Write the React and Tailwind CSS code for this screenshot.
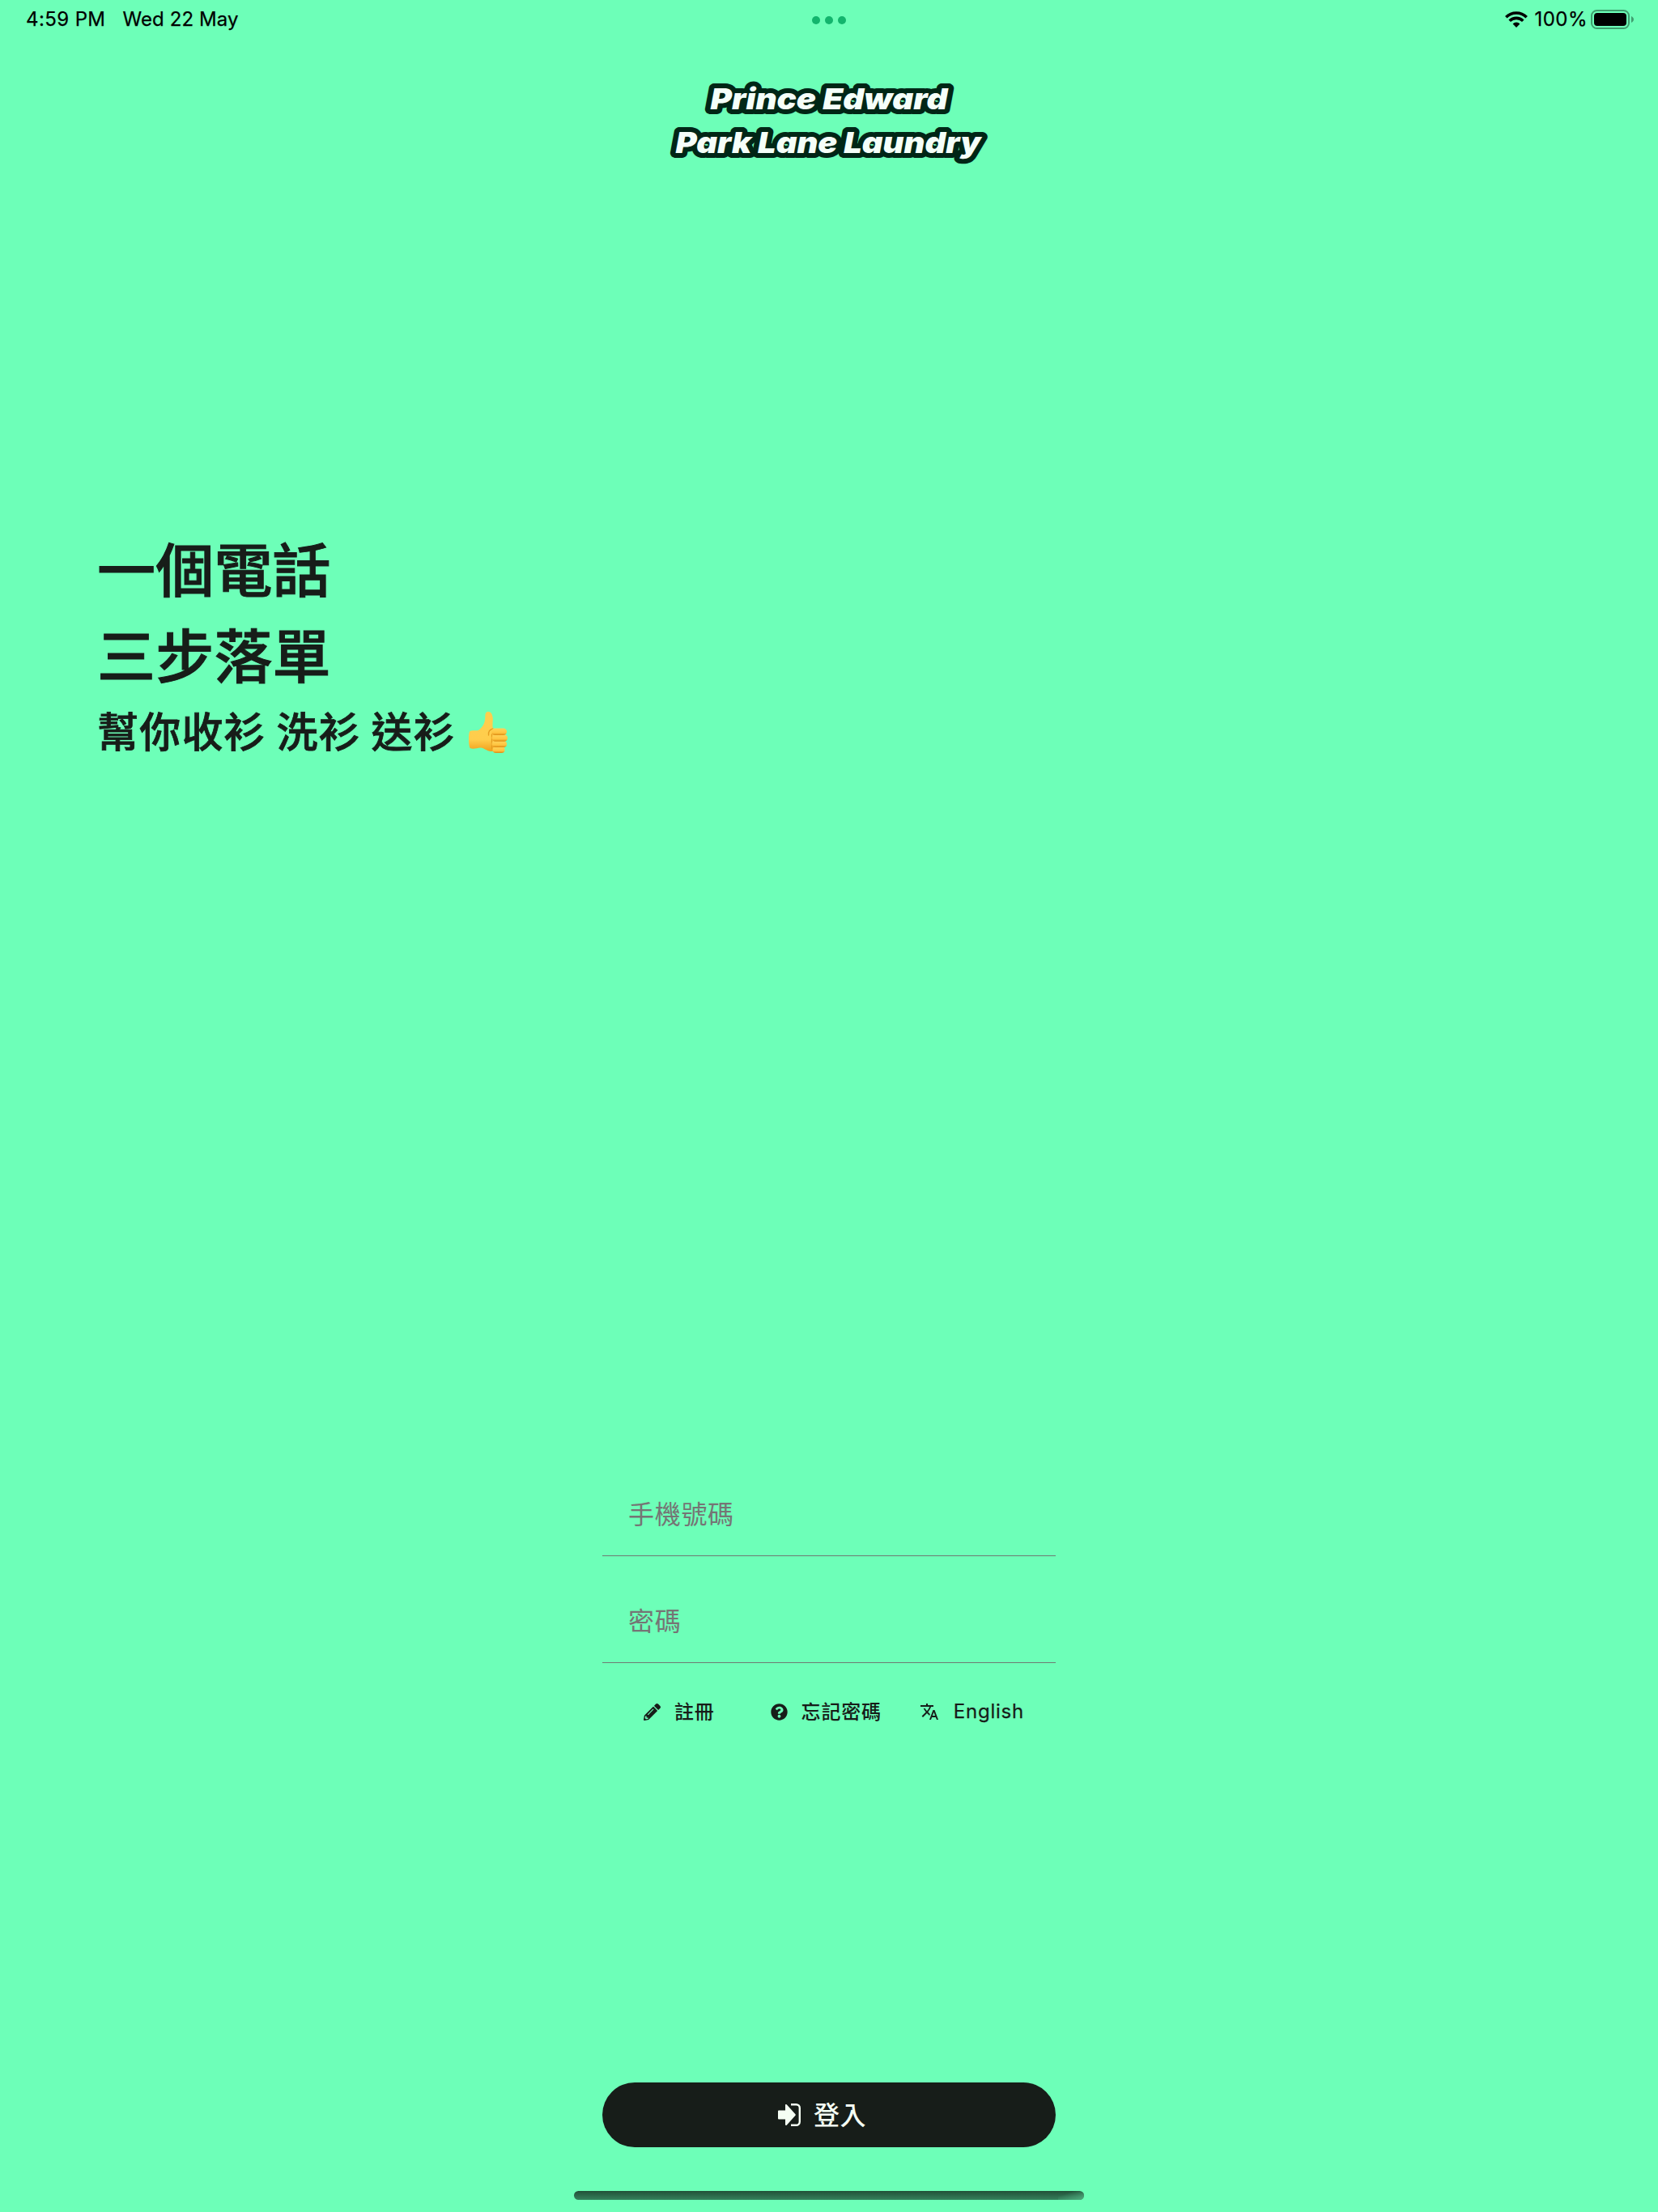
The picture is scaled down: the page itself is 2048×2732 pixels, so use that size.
import React from "react";
import { FaPencilAlt, FaQuestionCircle } from "react-icons/fa";
import { MdTranslate } from "react-icons/md";

const cjk = "font-['Noto_Sans_CJK_TC',sans-serif]";

function StatusBar() {
  return (
    <header className="grid h-12 grid-cols-3 items-center px-8 font-['Inter',sans-serif] text-[24px] font-normal leading-[46px] text-black [-webkit-text-stroke:0.25px_black]">
      <div className="flex gap-[21px] whitespace-nowrap">
        <span className="tracking-[0.4px]">4:59 PM</span>
        <span className="tracking-[0.1px]">Wed 22 May</span>
      </div>
      <div className="flex justify-center gap-1.5 pt-0.5">
        <i className="size-2.5 rounded-full bg-[#13b56d]" />
        <i className="size-2.5 rounded-full bg-[#13b56d]" />
        <i className="size-2.5 rounded-full bg-[#13b56d]" />
      </div>
      <div className="-mr-0.5 flex items-center justify-end">
        <svg width="28" height="20" viewBox="0 0 28 20" fill="none" stroke="#000" strokeWidth="3.6">
          <path d="M1.3 7.2a18 18 0 0 1 25.4 0" />
          <path d="M5.7 11.8a11.7 11.7 0 0 1 16.6 0" />
          <path d="M9.6 15.4a6.2 6.2 0 0 1 8.8 0L14 20z" fill="#000" stroke="none" />
        </svg>
        <span className="ml-2 tracking-[0.5px]">100%</span>
        <svg className="ml-1" width="53" height="24" viewBox="0 0 53 24">
          <rect x="1" y="1" width="46" height="22" rx="6.5" fill="none" stroke="#3f9e6e" strokeWidth="2" />
          <rect x="4" y="4" width="40" height="16" rx="4" fill="#000" />
          <path d="M50 8c1.8 1 3 2.3 3 4s-1.2 3-3 4z" fill="#3f9e6e" />
        </svg>
      </div>
    </header>
  );
}

function Logo() {
  const text = {
    fontFamily: "Inter, sans-serif",
    fontWeight: 900,
    fontStyle: "italic",
    fontSize: 36,
    fill: "#f5fff9",
    stroke: "#002616",
    strokeWidth: 12,
    strokeLinejoin: "round",
    paintOrder: "stroke",
  };
  return (
    <svg className="mx-auto mt-12 block" width="400" height="110" viewBox="824 96 400 110">
      <text x="877.5" y="135" textLength="293" lengthAdjust="spacingAndGlyphs" {...text}>Prince Edward</text>
      <text x="834.5" y="189" textLength="377" lengthAdjust="spacingAndGlyphs" {...text}>Park Lane Laundry</text>
    </svg>
  );
}

function ThumbsUp() {
  return (
    <svg className="mt-5 self-start" width="48" height="51" viewBox="0 0 48 51">
      <defs>
        <linearGradient id="palm" x1="0" y1="0" x2="0" y2="1">
          <stop offset="0" stopColor="#ffcf4f" />
          <stop offset="0.7" stopColor="#ffcd4c" />
          <stop offset="1" stopColor="#f0a01c" />
        </linearGradient>
        <linearGradient id="finger" x1="0" y1="0" x2="0" y2="1">
          <stop offset="0" stopColor="#ffd35a" />
          <stop offset="0.65" stopColor="#ffc440" />
          <stop offset="1" stopColor="#dc8a12" />
        </linearGradient>
      </defs>
      <path d="M1 24.500C5 22 9.500 24.500 12.500 22.500 18 18.500 20.500 13 20.300 5.500 20.200 2 21.500 0 24.200 0c3.300 0 4.800 3 5.400 7 .7 5-1 9.500.4 13.500L34 24v24l-6 1c-6-.3-9-4-13-4.500-4-.5-8 2.500-13.500.5C-.7 39-.3 29 1 24.500z" fill="url(#palm)" />
      <path d="M30 21c-4 1-6 4-5.500 8M28.500 28v18" fill="none" stroke="#e59c20" strokeWidth="1.300" strokeLinecap="round" />
      <rect x="29.500" y="43" width="15" height="8" rx="4" fill="url(#finger)" />
      <rect x="28.500" y="36" width="18.500" height="8" rx="4" fill="url(#finger)" />
      <rect x="28.500" y="28.200" width="19.500" height="8.500" rx="4.200" fill="url(#finger)" />
      <rect x="28" y="20.500" width="19" height="8.500" rx="4.200" fill="url(#finger)" />
    </svg>
  );
}

function Field({ label }) {
  return (
    <div className="flex h-[132px] items-center border-b border-[#6f7c72] px-8 pt-[25px]">
      <span className="text-[32px] leading-none tracking-[0.7px] text-[#757575]">{label}</span>
    </div>
  );
}

export default function App() {
  return (
    <div className={`${cjk} flex h-[2732px] w-[2048px] flex-col bg-[#6dffb8] text-[#171d19]`}>
      <StatusBar />
      <Logo />
      <main className="flex flex-1 flex-col">
        <section className="mt-[441px] h-[324px] pl-[120px]">
          <h1 className="text-[72px] font-medium leading-[106px] tracking-[0.2px] [-webkit-text-stroke:1px_#171d19]">一個電話<br />三步落單</h1>
          <h2 className="flex items-center text-[51px] font-medium leading-[84px] tracking-[1.2px] [-webkit-text-stroke:0.8px_#171d19]">
            <span className="mr-4">幫你收衫 洗衫 送衫</span>
            <ThumbsUp />
          </h2>
        </section>
        <section className="mx-auto mt-[819px] w-[560px]">
          <Field label="手機號碼" />
          <Field label="密碼" />
          <nav className="mt-[46px] flex h-7 items-center text-[24px] font-medium leading-7">
            <span className="ml-[51px] flex items-center gap-[17px]"><FaPencilAlt className="size-[21px]" /><span className="pb-[3px] tracking-[0.8px]">註冊</span></span>
            <span className="ml-[69px] flex items-center gap-[17px]"><FaQuestionCircle className="size-[21px]" /><span className="pb-[3px] tracking-[0.8px]">忘記密碼</span></span>
            <span className="ml-[47px] flex items-center gap-[18px]"><MdTranslate className="size-6" /><span className="font-['Inter',sans-serif] font-normal tracking-[0.75px] [-webkit-text-stroke:0.25px_#171d19]">English</span></span>
          </nav>
        </section>
        <div className="flex-1" />
        <button className="mx-auto flex h-20 w-[560px] items-center justify-center gap-4 rounded-[40px] bg-[#171d19] pr-[17px] text-[32px] font-medium text-[#f5fff4]">
          <svg width="28" height="28" viewBox="0 0 28 28">
            <path d="M1 8.500h8V2a1 1 0 0 1 1.700-.7l10.600 11.600a1.500 1.500 0 0 1 0 2.200L10.700 26.700A1 1 0 0 1 9 26v-6.500H1a1 1 0 0 1-1-1v-9a1 1 0 0 1 1-1z" fill="currentColor" />
            <path d="M16 1.200h6.500a4.300 4.300 0 0 1 4.300 4.300v17a4.300 4.300 0 0 1-4.300 4.300H16" fill="none" stroke="currentColor" strokeWidth="2.400" />
          </svg>
          <span className="pb-1 tracking-[0.5px]">登入</span>
        </button>
        <div className="mx-auto mb-[15px] mt-[54px] h-[11px] w-[630px] overflow-hidden rounded-full bg-gradient-to-b from-[#225038] to-[#35815c]">
          <div className="ml-auto h-full w-8 bg-gradient-to-br from-transparent from-30% to-[#4fab7e]" />
        </div>
      </main>
    </div>
  );
}
